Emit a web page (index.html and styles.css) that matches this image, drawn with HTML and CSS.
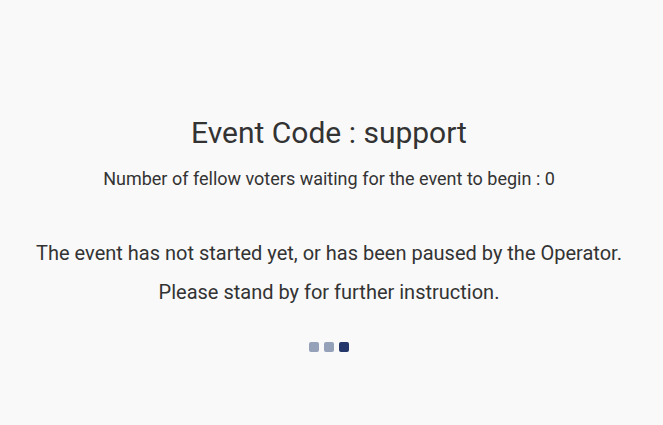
FILE: index.html
```html
<!DOCTYPE html>
<html>
<head>
<meta charset="utf-8">
<link rel="stylesheet" href="styles.css">
</head>
<body>
<main class="waiting">
  <h1 class="title">Event Code : support</h1>
  <p class="count">Number of fellow voters waiting for the event to begin : 0</p>
  <div class="message">
    <p>The event has not started yet, or has been paused by the Operator.</p>
    <p>Please stand by for further instruction.</p>
  </div>
  <div class="dots">
    <span class="dot"></span>
    <span class="dot"></span>
    <span class="dot active"></span>
  </div>
</main>
</body>
</html>
```
FILE: styles.css
```css
html, body {
  margin: 0;
  padding: 0;
  background: #f9f9f9;
}
body {
  font-family: Roboto, "Liberation Sans", sans-serif;
  color: #333333;
  width: 663px;
  height: 425px;
}
.waiting {
  display: flex;
  flex-direction: column;
  align-items: center;
  text-align: center;
  padding-top: 113px;
  padding-right: 5px;
}
.title {
  margin: 0;
  font-size: 30px;
  font-weight: 400;
  line-height: 40px;
}
.count {
  margin: 12px 0 0;
  font-size: 18px;
  line-height: 27px;
}
.message {
  margin-top: 42px;
  font-size: 20px;
}
.message p {
  margin: 0;
  line-height: 39px;
}
.dots {
  display: flex;
  gap: 5px;
  margin-top: 30px;
}
.dot {
  width: 10px;
  height: 10px;
  border-radius: 2px;
  background: #95a0b9;
}
.dot.active {
  background: #24366a;
}
```
